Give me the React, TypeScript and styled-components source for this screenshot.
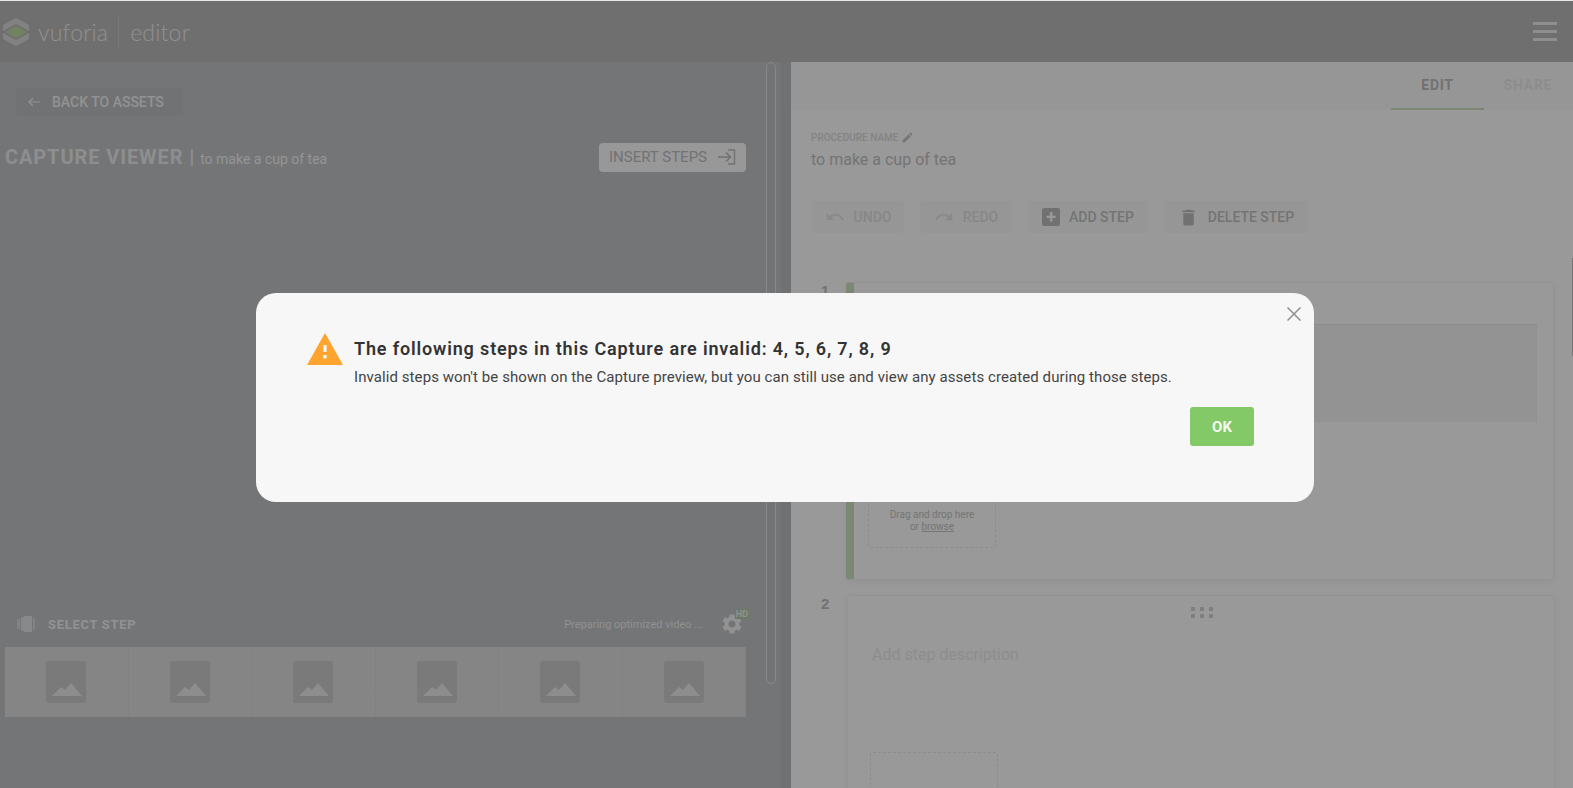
import { FC, ReactElement } from "react";
import styled, { createGlobalStyle } from "styled-components";
import { MdDelete, MdEdit, MdRedo, MdSettings, MdUndo } from "react-icons/md";

const GlobalStyle = createGlobalStyle`
  html, body {
    margin: 0;
    padding: 0;
    height: 100%;
    overflow: hidden;
    background: #fbfbfb;
    font-family: "Roboto", "Liberation Sans", sans-serif;
  }
  #root {
    height: 100%;
  }
  * {
    box-sizing: border-box;
  }
`;

/*
    ====================== [Page frame] ======================
*/

const Page = styled.div`
  width: 1573px;
  height: 788px;
  display: flex;
  flex-direction: column;
  overflow: hidden;
`;

const Header = styled.header`
  height: 62px;
  flex: none;
  display: flex;
  align-items: center;
  padding: 0 16px 0 3px;
  background: #b9b9b9;
  border-top: 1px solid #e8e8e8;
`;

const LogoText = styled.span`
  font-family: "Lato", sans-serif;
  font-weight: 300;
  font-size: 23px;
  color: #f0f0f0;
  margin-left: 9px;
  letter-spacing: 0.2px;
`;

const HeaderDivider = styled.div`
  width: 1px;
  height: 34px;
  margin: 0 11px 0 10px;
  background: #c6c6c6;
`;

const Burger = styled.div`
  margin-left: auto;
  width: 24px;
  display: flex;
  flex-direction: column;
  gap: 5px;

  span {
    height: 3px;
    background: #eeeeee;
  }
`;

const Body = styled.div`
  flex: 1;
  display: flex;
  min-height: 0;
`;

/*
    ====================== [Left panel] ======================
*/

const LeftPanel = styled.section`
  width: 791px;
  flex: none;
  display: flex;
  background: #c1c3c6;
`;

const LeftContent = styled.div`
  width: 766px;
  flex: none;
  display: flex;
  flex-direction: column;
  padding: 26px 20px 0 5px;
`;

const BackButton = styled.div`
  align-self: flex-start;
  width: 167px;
  height: 28px;
  margin-left: 11px;
  display: flex;
  align-items: center;
  gap: 11px;
  padding-left: 12px;
  background: #bcbec1;
  border-radius: 3px;
  font-size: 14px;
  font-weight: 500;
  color: #f3f4f6;
`;

const TitleRow = styled.div`
  height: 30px;
  margin-top: 26px;
  display: flex;
  align-items: center;
  justify-content: space-between;
`;

const Title = styled.div`
  display: flex;
  align-items: baseline;
  font-size: 20px;
  font-weight: 700;
  letter-spacing: 0.9px;
  color: #ecedef;

  small {
    margin-left: 5px;
    font-size: 14px;
    font-weight: 400;
    letter-spacing: 0;
    color: #f7f8f9;
  }
`;

const InsertButton = styled.div`
  width: 147px;
  height: 29px;
  display: flex;
  align-items: center;
  justify-content: space-between;
  padding: 0 10px;
  background: #ffffff;
  border-radius: 4px;
  font-size: 15px;
  color: #bfc0c3;
  opacity: 0.98;
`;

const SelectRow = styled.div`
  height: 30px;
  margin-top: 437px;
  display: flex;
  align-items: center;
  padding-left: 12px;
  font-size: 13px;
  font-weight: 700;
  letter-spacing: 0.7px;
  color: #f2f3f4;
`;

const SelectLabel = styled.span`
  margin-left: 11px;
`;

const PreparingText = styled.span`
  margin-left: auto;
  font-size: 11px;
  font-weight: 400;
  letter-spacing: 0;
  color: #eef0f2;
`;

const GearWrap = styled.div`
  position: relative;
  width: 26px;
  height: 24px;
  margin-left: 17px;
  display: flex;
  align-items: center;
  color: #f3f3f3;
`;

const HdBadge = styled.span`
  position: absolute;
  top: -3px;
  right: -3px;
  padding: 0 1px;
  background: #b7c9ab;
  font-size: 9px;
  line-height: 10px;
  font-weight: 700;
  letter-spacing: 0;
  color: #f0f4ec;
`;

const Strip = styled.div`
  position: relative;
  height: 70px;
  margin-top: 8px;
  display: grid;
  grid-template-columns: repeat(6, 1fr);
  background: #dedede;
`;

const Thumb = styled.div`
  display: flex;
  align-items: center;
  justify-content: center;
  border-right: 1px solid #d8d8d8;

  &:last-child {
    border-right: 0;
  }
`;

const StripClock = styled.div`
  position: absolute;
  left: 359px;
  top: 25px;
  display: flex;
`;

const ScrollTrack = styled.div`
  width: 10px;
  height: 622px;
  flex: none;
  border: 1px solid #e2e3e4;
  border-radius: 5px;
  background: #bfc1c4;
`;

const PanelEdge = styled.div`
  flex: 1;
  background: #bbbdc0;
  margin-left: 5px;
`;

/*
    ====================== [Right panel] ======================
*/

const RightPanel = styled.section`
  position: relative;
  flex: 1;
  min-width: 0;
  background: #ffffff;
  display: flex;
  flex-direction: column;
`;

const TabBar = styled.div`
  height: 48px;
  flex: none;
  display: flex;
  justify-content: flex-end;
  background: #fbfbfb;
  padding-right: 1px;
`;

const Tab = styled.div<{ $active?: boolean }>`
  width: ${(p) => (p.$active ? "93px" : "88px")};
  display: flex;
  align-items: center;
  justify-content: center;
  font-size: 14px;
  font-weight: 700;
  letter-spacing: 0.7px;
  color: ${(p) => (p.$active ? "#bdbdbd" : "#ececec")};
  border-bottom: 2px solid ${(p) => (p.$active ? "#cfe0c3" : "transparent")};
`;

const ProcedureBlock = styled.div`
  padding: 20px 0 0 20px;
`;

const ProcedureLabel = styled.div`
  display: flex;
  align-items: center;
  gap: 3px;
  height: 14px;
  font-size: 10px;
  font-weight: 500;
  color: #dcdcdc;
`;

const ProcedureName = styled.div`
  margin-top: 6px;
  font-size: 16px;
  color: #c2c2c2;
`;

const Toolbar = styled.div`
  display: flex;
  gap: 16px;
  margin: 32px 0 0 21px;
`;

const ToolButton = styled.div<{ $width: number; $disabled?: boolean }>`
  width: ${(p) => p.$width}px;
  height: 32px;
  display: flex;
  align-items: center;
  justify-content: center;
  gap: 9px;
  background: #fbfbfb;
  border-radius: 3px;
  font-size: 14px;
  font-weight: 500;
  color: ${(p) => (p.$disabled ? "#e2e2e2" : "#c2c2c2")};
`;

const PlusBox = styled.span`
  width: 18px;
  height: 18px;
  border-radius: 2px;
  background: #bdbdbd;
  color: #ffffff;
  display: flex;
  align-items: center;
  justify-content: center;
  font-size: 18px;
  font-weight: 700;
  line-height: 1;
`;

const StepRow = styled.div<{ $top: number }>`
  display: flex;
  margin-top: ${(p) => p.$top}px;
`;

const StepNumber = styled.div<{ $width: number }>`
  width: ${(p) => p.$width}px;
  flex: none;
  padding-left: 30px;
  font-family: "Liberation Sans", sans-serif;
  font-size: 15px;
  font-weight: 700;
  color: #bfbfbf;
`;

const StepCard = styled.div<{ $active?: boolean }>`
  position: relative;
  width: 708px;
  flex: none;
  background: #ffffff;
  border-radius: 4px;
  border: 1px solid #f6f6f6;
  border-left: ${(p) => (p.$active ? "8px solid #cfe4bf" : "1px solid #f6f6f6")};
  box-shadow: 0 2px 6px rgba(0, 0, 0, 0.05);
`;

const FirstCardInner = styled.div`
  height: 296px;
  display: flex;
  flex-direction: column;
  padding: 41px 16px 0 0;
`;

const DescriptionBox = styled.div`
  height: 98px;
  flex: none;
  background: #f6f6f6;
  border-top: 1px solid #ececec;
  border-right: 1px solid #f2f2f2;
  margin-bottom: 0;
`;

const DropZone = styled.div<{ $left: number; $top: number }>`
  width: 128px;
  height: 90px;
  margin: ${(p) => p.$top}px 0 0 ${(p) => p.$left}px;
  flex: none;
  border: 1px dashed #ebebeb;
  border-radius: 3px;
  padding-top: 50px;
  text-align: center;
  font-size: 10px;
  line-height: 12px;
  color: #c4c4c4;

  u {
    text-decoration: underline;
  }
`;

const DragDots = styled.div`
  position: absolute;
  top: 11px;
  left: 343px;
  display: grid;
  grid-template-columns: repeat(3, 4px);
  gap: 3px 5px;

  i {
    width: 4px;
    height: 4px;
    background: #d4d4d4;
  }
`;

const Placeholder = styled.div`
  padding: 49px 0 0 24px;
  font-family: "Roboto", sans-serif;
  font-size: 16px;
  color: #ececec;
`;

const SecondCardInner = styled.div`
  height: 240px;
  display: flex;
  flex-direction: column;
`;

const EdgeBar = styled.div`
  position: absolute;
  top: 196px;
  right: 0;
  width: 1px;
  height: 98px;
  background: #c4c4c4;
`;

/*
    ====================== [Modal] ======================
*/

const Overlay = styled.div`
  position: fixed;
  inset: 1px 0 0;
  background: rgba(0, 0, 0, 0.4);
  padding: 292px 0 0 256px;
`;

const Modal = styled.div`
  position: relative;
  width: 1058px;
  height: 209px;
  padding: 37px 60px 0 51px;
  background: #f7f7f7;
  border-radius: 20px;
  display: grid;
  grid-template-columns: 47px 1fr;
  align-content: start;
`;

const CloseButton = styled.div`
  position: absolute;
  top: 14px;
  right: 13px;
  display: flex;
`;

const WarningIcon = styled.div`
  display: flex;
  padding-top: 3px;
`;

const ModalTitle = styled.h2`
  margin: 0;
  height: 36px;
  display: flex;
  align-items: center;
  font-size: 18px;
  font-weight: 600;
  letter-spacing: 0.85px;
  color: #333333;
`;

const ModalText = styled.p`
  grid-column: 2;
  margin: 0;
  height: 22px;
  line-height: 22px;
  font-size: 15px;
  letter-spacing: 0.08px;
  white-space: nowrap;
  color: #444444;
`;

const ModalActions = styled.div`
  grid-column: 2;
  margin-top: 19px;
  display: flex;
  justify-content: flex-end;
`;

const OkButton = styled.button`
  width: 64px;
  height: 39px;
  border: 0;
  border-radius: 3px;
  background: #84c968;
  font-family: inherit;
  font-size: 15px;
  font-weight: 700;
  color: #f4f9f0;
`;

/*
    ====================== [Drawings] ======================
*/

const VuforiaMark: FC = (): ReactElement => (
  <svg width="26" height="28" viewBox="0 0 26 28">
    <path d="M13 0 L26 7 L26 13 L13 6 L0 13 L0 7 Z" fill="#d9d9d9" />
    <path d="M0 15 L13 22 L26 15 L26 21 L13 28 L0 21 Z" fill="#d9d9d9" />
    <path d="M13 8 L24 14 L13 20 L2 14 Z" fill="#bcd9a6" />
  </svg>
);

const ThumbIcon: FC = (): ReactElement => (
  <svg width="40" height="42" viewBox="0 0 40 42">
    <rect width="40" height="42" rx="3" fill="#cbcbcb" />
    <path d="M6 35 L15 26 L19 29 L25 22 L36 35 Z" fill="#ececec" />
  </svg>
);

const FilmIcon: FC = (): ReactElement => (
  <svg width="20" height="16" viewBox="0 0 20 16">
    <rect x="0" y="3" width="3" height="10" fill="#d9dadc" />
    <rect x="4" y="1" width="3" height="14" fill="#e0e1e3" />
    <rect x="7" y="0" width="8" height="16" fill="#e4e5e7" />
    <rect x="16" y="2" width="2" height="12" fill="#d9dadc" />
  </svg>
);

const ClockIcon: FC = (): ReactElement => (
  <svg width="20" height="20" viewBox="0 0 20 20" fill="none" stroke="#e0e0e0">
    <circle cx="10" cy="10" r="8.5" strokeWidth="1.4" />
    <path d="M10 4 V11 H14" strokeWidth="1" />
  </svg>
);

const ArrowLeftIcon: FC = (): ReactElement => (
  <svg width="13" height="10" viewBox="0 0 13 10" fill="none" stroke="#f0f1f3" strokeWidth="1.2">
    <path d="M12 5 H1 M5 1 L1 5 L5 9" />
  </svg>
);

const InsertIcon: FC = (): ReactElement => (
  <svg width="18" height="16" viewBox="0 0 18 16" fill="none" stroke="#bfc0c3" strokeWidth="1.5">
    <path d="M0 8 H12 M8 3.5 L12.5 8 L8 12.5 M10 1 H16.5 V15 H10" />
  </svg>
);

const CloseIcon: FC = (): ReactElement => (
  <svg width="14" height="14" viewBox="0 0 14 14" stroke="#8f8f8f" strokeWidth="1.5">
    <path d="M0.5 0.5 L13.5 13.5 M13.5 0.5 L0.5 13.5" />
  </svg>
);

const TriangleIcon: FC = (): ReactElement => (
  <svg width="36" height="32" viewBox="0 0 36 32">
    <path d="M18 0 L36 32 H0 Z" fill="#ffa42e" />
    <rect x="16.4" y="12" width="3.2" height="7" fill="#f7f7f7" />
    <rect x="16.4" y="22" width="3.2" height="3.4" fill="#f7f7f7" />
  </svg>
);

/*
    ====================== [App] ======================
*/

const THUMB_IDS: Array<number> = [1, 2, 3, 4, 5, 6];
const DOT_IDS: Array<number> = [1, 2, 3, 4, 5, 6];

export default function App(): ReactElement {
  return (
    <>
      <GlobalStyle />
      <Page>
        <Header>
          <VuforiaMark />
          <LogoText>vuforia</LogoText>
          <HeaderDivider />
          <LogoText style={{ marginLeft: 0 }}>editor</LogoText>
          <Burger>
            <span />
            <span />
            <span />
          </Burger>
        </Header>
        <Body>
          <LeftPanel>
            <LeftContent>
              <BackButton>
                <ArrowLeftIcon />
                BACK TO ASSETS
              </BackButton>
              <TitleRow>
                <Title>
                  CAPTURE VIEWER |<small>to make a cup of tea</small>
                </Title>
                <InsertButton>
                  INSERT STEPS
                  <InsertIcon />
                </InsertButton>
              </TitleRow>
              <SelectRow>
                <FilmIcon />
                <SelectLabel>SELECT STEP</SelectLabel>
                <PreparingText>Preparing optimized video ...</PreparingText>
                <GearWrap>
                  <MdSettings size={24} />
                  <HdBadge>HD</HdBadge>
                </GearWrap>
              </SelectRow>
              <Strip>
                {THUMB_IDS.map((id) => (
                  <Thumb key={id}>
                    <ThumbIcon />
                  </Thumb>
                ))}
                <StripClock>
                  <ClockIcon />
                </StripClock>
              </Strip>
            </LeftContent>
            <ScrollTrack />
            <PanelEdge />
          </LeftPanel>
          <RightPanel>
            <TabBar>
              <Tab $active>EDIT</Tab>
              <Tab>SHARE</Tab>
            </TabBar>
            <ProcedureBlock>
              <ProcedureLabel>
                PROCEDURE NAME
                <MdEdit size={13} color="#c4c4c4" />
              </ProcedureLabel>
              <ProcedureName>to make a cup of tea</ProcedureName>
            </ProcedureBlock>
            <Toolbar>
              <ToolButton $width={92} $disabled>
                <MdUndo size={20} color="#e4e4e4" />
                UNDO
              </ToolButton>
              <ToolButton $width={92} $disabled>
                <MdRedo size={20} color="#e4e4e4" />
                REDO
              </ToolButton>
              <ToolButton $width={120}>
                <PlusBox>+</PlusBox>
                ADD STEP
              </ToolButton>
              <ToolButton $width={144}>
                <MdDelete size={21} color="#bdbdbd" />
                DELETE STEP
              </ToolButton>
            </Toolbar>
            <StepRow $top={49}>
              <StepNumber $width={55}>1</StepNumber>
              <StepCard $active>
                <FirstCardInner>
                  <DescriptionBox />
                  <DropZone $left={14} $top={36}>
                    Drag and drop here
                    <br />
                    or <u>browse</u>
                  </DropZone>
                </FirstCardInner>
              </StepCard>
            </StepRow>
            <StepRow $top={15}>
              <StepNumber $width={56}>2</StepNumber>
              <StepCard>
                <SecondCardInner>
                  <DragDots>
                    {DOT_IDS.map((id) => (
                      <i key={id} />
                    ))}
                  </DragDots>
                  <Placeholder>Add step description</Placeholder>
                  <DropZone $left={22} $top={88} />
                </SecondCardInner>
              </StepCard>
            </StepRow>
            <EdgeBar />
          </RightPanel>
        </Body>
      </Page>
      <Overlay>
        <Modal>
          <CloseButton>
            <CloseIcon />
          </CloseButton>
          <WarningIcon>
            <TriangleIcon />
          </WarningIcon>
          <ModalTitle>The following steps in this Capture are invalid: 4, 5, 6, 7, 8, 9</ModalTitle>
          <ModalText>
            Invalid steps won't be shown on the Capture preview, but you can still use and view any
            assets created during those steps.
          </ModalText>
          <ModalActions>
            <OkButton>OK</OkButton>
          </ModalActions>
        </Modal>
      </Overlay>
    </>
  );
}
